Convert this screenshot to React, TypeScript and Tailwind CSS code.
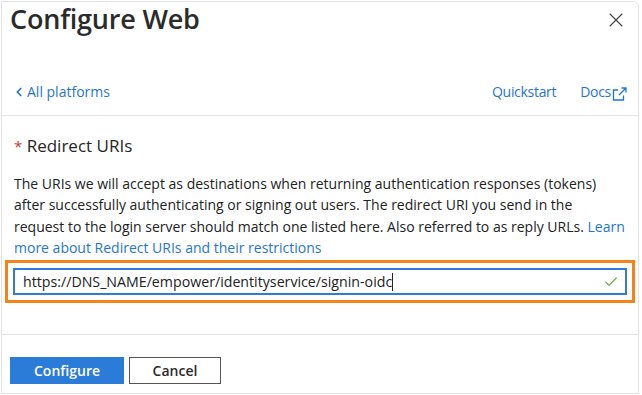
import { Check, ChevronLeft, X } from "lucide-react";

const font = { fontFamily: '"Open Sans", "Noto Sans", sans-serif' };

const ExternalIcon = () => (
  <svg width="17" height="16" viewBox="0 0 17 16" fill="none" stroke="currentColor" strokeWidth="1.3">
    <path d="M7 4H2.5v10h10V9.5" />
    <path d="M8 9l7-7M10.5 2H15v4.5" />
  </svg>
);

export default function App() {
  return (
    <div className="w-[642px] h-[395px] bg-white overflow-hidden" style={font}>
      <div className="ml-px mt-px w-[638px] h-[393px] border border-[#e3e3e3] rounded-tr-[6px] flex flex-col text-[#323130]">
        <div className="h-[113px] flex flex-col">
          <div className="flex justify-between items-start pl-[8px] pr-[10px]">
            <h1 className="text-[27px] leading-[34px] font-semibold tracking-[-0.2px] text-[#2b2b2b]">Configure Web</h1>
            <X className="mt-[6px] text-[#444]" size={24} strokeWidth={1.1} />
          </div>
          <div className="mt-auto mb-[13px] flex items-center justify-between pl-[10px] pr-[10px] text-[14px] text-[#1f76d2] font-medium">
            <span className="flex items-center gap-[1px]">
              <ChevronLeft size={14} strokeWidth={3} />
              All platforms
            </span>
            <span className="flex items-center gap-[24px] tracking-[-0.3px]">
              <span>Quickstart</span>
              <span className="flex items-end">
                Docs
                <ExternalIcon />
              </span>
            </span>
          </div>
        </div>
        <div className="border-t border-[#e3e3e3] h-[219px] flex flex-col px-[3px]">
          <div className="mt-[17px] pl-[9px] text-[17px] leading-[26px] text-[#252525]">
            <span className="text-[#d13438] text-[15px] align-top">*</span> Redirect URIs
          </div>
          <p className="mt-[14px] pl-[9px] text-[14px] leading-[21.3px] text-[#222] whitespace-nowrap">
            The URIs we will accept as destinations when returning authentication responses (tokens)
            <br />
            after successfully authenticating or signing out users. The redirect URI you send in the
            <br />
            request to the login server should match one listed here. Also referred to as reply URLs.{" "}
            <span className="text-[#1f76d2]">Learn</span>
            <br />
            <span className="text-[#1f76d2]">more about Redirect URIs and their restrictions</span>
          </p>
          <div className="mt-[2px] border-[3px] border-[#f7821b] p-[5px]">
            <div className="h-[27px] border-2 border-[#2f7bd6] flex items-center pl-[8px] pr-[6px]">
              <span className="text-[14.2px] text-[#222]">https://DNS_NAME/empower/identityservice/signin-oidc</span>
              <span className="w-px h-[18px] bg-[#222]" />
              <Check className="ml-auto text-[#5fae3c]" size={16} strokeWidth={1.6} />
            </div>
          </div>
        </div>
        <div className="border-t border-[#e3e3e3] flex-1 flex items-start gap-[5px] pl-[8px] pt-[22px]">
          <button className="w-[114px] h-[27px] bg-[#2b7bd8] text-white text-[14px] font-semibold">Configure</button>
          <button className="w-[92px] h-[27px] border border-[#555] text-[14px] font-semibold text-[#2b2b2b]">Cancel</button>
        </div>
      </div>
    </div>
  );
}
